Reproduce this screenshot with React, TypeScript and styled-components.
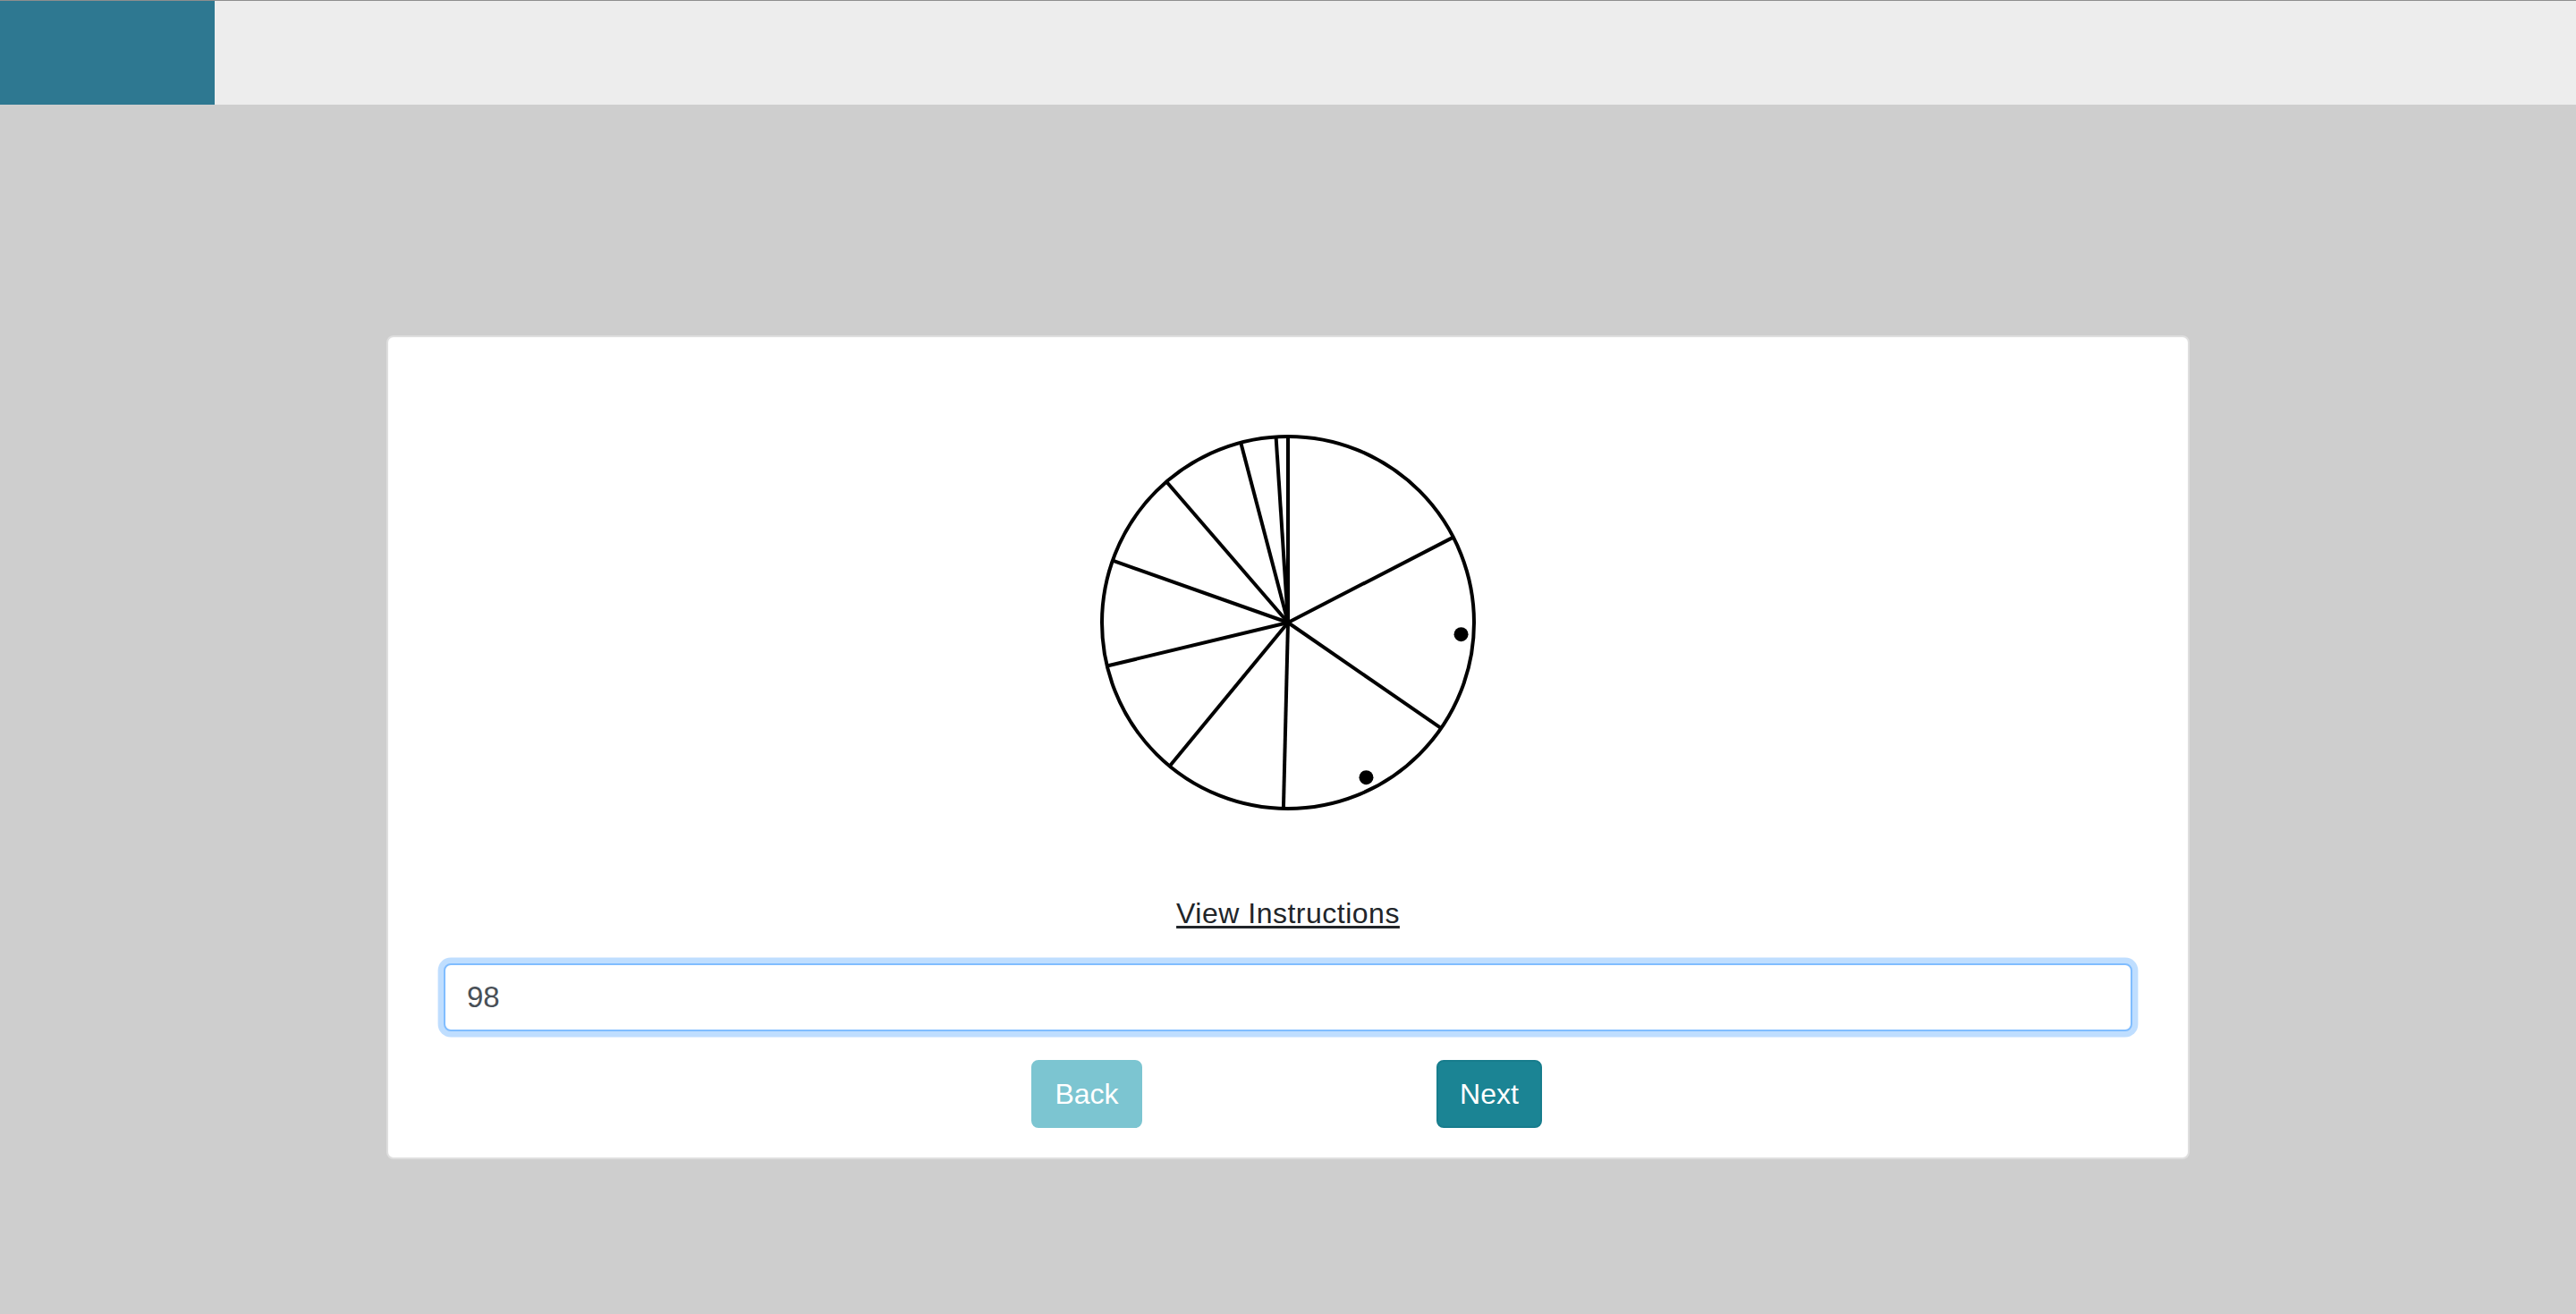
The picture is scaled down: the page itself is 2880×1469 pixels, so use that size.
import React from "react";
import styled, { createGlobalStyle } from "styled-components";

const GlobalStyle = createGlobalStyle`
  html, body {
    margin: 0;
    padding: 0;
    background: #cecece;
    font-family: "Liberation Sans", Arial, Helvetica, sans-serif;
  }
  * { box-sizing: border-box; }
`;

const Page = styled.div`
  min-height: 100vh;
  background: #cecece;
  display: flex;
  flex-direction: column;
  align-items: center;
`;

const Header = styled.header`
  align-self: stretch;
  height: 117px;
  border-top: 1px solid #8e8e8e;
  background: #ededed;
  display: flex;
`;

const Brand = styled.div`
  width: 240px;
  background: #2e7891;
`;

const Card = styled.main`
  margin-top: 258px;
  width: 70%;
  background: #ffffff;
  border: 2px solid #dfdfdf;
  border-radius: 8px;
  padding: 32px 62px 33px;
  display: flex;
  flex-direction: column;
  align-items: center;
  gap: 32px;
`;

const Chart = styled.svg`
  display: block;
  width: 600px;
  height: 556px;
`;

const InstructionsLink = styled.a`
  font-size: 32px;
  line-height: 48px;
  letter-spacing: 0.5px;
  color: #212529;
  text-decoration: underline;
  text-underline-offset: 3px;
  cursor: pointer;
`;

const AnswerInput = styled.input`
  width: 100%;
  height: 76px;
  padding: 12px 24px;
  font-family: inherit;
  font-size: 33px;
  line-height: 48px;
  color: #495057;
  background: #fff;
  border: 2px solid #80bdff;
  border-radius: 8px;
  outline: none;
  box-shadow: 0 0 0 6.4px rgba(0, 123, 255, 0.25);
`;

const ButtonRow = styled.div`
  display: grid;
  grid-template-columns: 450px 450px;
  justify-items: center;
`;

const NavButton = styled.button<{ $disabled?: boolean }>`
  height: 76px;
  padding: 12px 24px;
  font-family: inherit;
  font-size: 32px;
  line-height: 48px;
  color: #ffffff;
  background: ${(p) => (p.$disabled ? "#7cc5d1" : "#1b8494")};
  border: 2px solid ${(p) => (p.$disabled ? "#7cc5d1" : "#177d8d")};
  border-radius: 8px;
  cursor: ${(p) => (p.$disabled ? "default" : "pointer")};
`;

const CX = 300;
const CY = 287;
const R = 208;
const angles = [0, -3.7, -14.7, -40.8, -70.5, -103.5, -140.5, 181.4, 124.6, 62.7];
const dots = [93.9, 153.2];

const pt = (deg: number, r: number) => {
  const a = (deg * Math.PI) / 180;
  return { x: CX + r * Math.sin(a), y: CY - r * Math.cos(a) };
};

export default function App() {
  return (
    <>
      <GlobalStyle />
      <Page>
        <Header>
          <Brand />
        </Header>
        <Card>
          <Chart viewBox="0 0 600 556">
            {angles.map((d, i) => {
              const p = pt(d, R);
              return (
                <line key={i} x1={CX} y1={CY} x2={p.x} y2={p.y} stroke="#000" strokeWidth={4} />
              );
            })}
            <circle cx={CX} cy={CY} r={R} fill="none" stroke="#000" strokeWidth={4} />
            {dots.map((d, i) => {
              const p = pt(d, 194);
              return <circle key={i} cx={p.x} cy={p.y} r={8} fill="#000" />;
            })}
          </Chart>
          <InstructionsLink>View Instructions</InstructionsLink>
          <AnswerInput defaultValue="98" />
          <ButtonRow>
            <NavButton $disabled>Back</NavButton>
            <NavButton>Next</NavButton>
          </ButtonRow>
        </Card>
      </Page>
    </>
  );
}
